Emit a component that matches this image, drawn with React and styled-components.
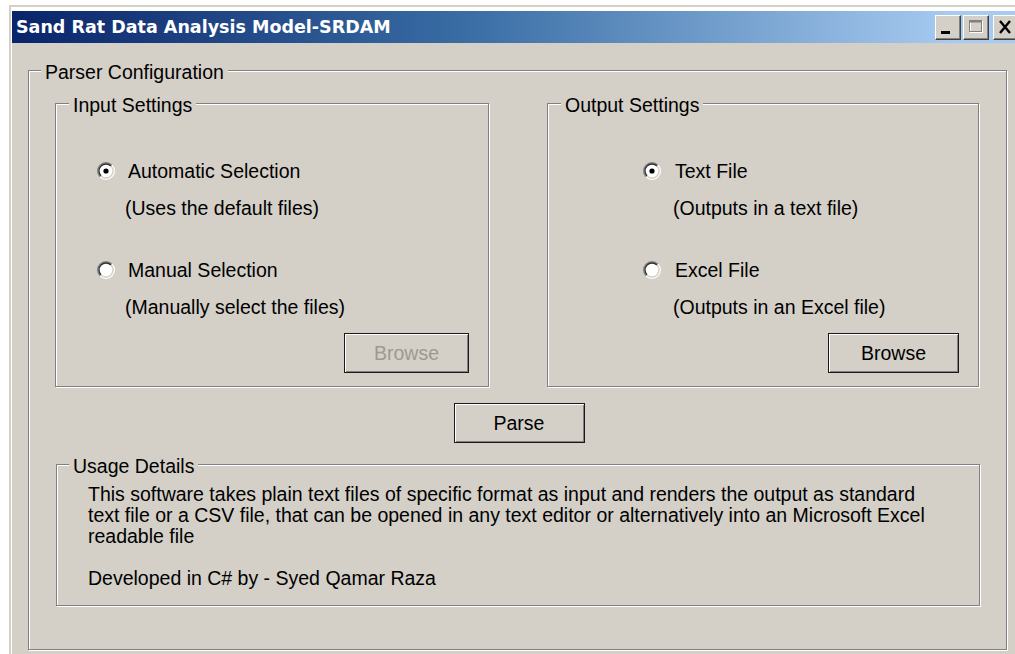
import React from "react";
import styled, { createGlobalStyle } from "styled-components";

const FACE = "#d4d0c8";
const SHADOW = "#808080";
const UI_FONT = `"Liberation Sans", Arial, sans-serif`;

const GlobalStyle = createGlobalStyle`
  html, body {
    margin: 0;
    padding: 0;
    background: #fff;
    overflow: hidden;
  }
  body {
    font-family: ${UI_FONT};
  }
`;

const Window = styled.div`
  margin: 5px 0 0 9px;
  width: 1020px;
  border-top: 2px solid ${FACE};
  border-left: 2px solid ${FACE};
  padding: 4px 0 0 1px;
  background: #fff;
`;

const TitleBar = styled.div`
  height: 32px;
  display: flex;
  align-items: center;
  justify-content: space-between;
  padding: 0 0 0 4px;
  background: linear-gradient(to right, #0a246a 0%, #3a6ea5 45%, #a6caf0 92%);
`;

const TitleText = styled.div`
  font-family: "DejaVu Sans", Verdana, sans-serif;
  font-weight: bold;
  font-size: 17.5px;
  color: #fff;
`;

const Controls = styled.div`
  display: flex;
  align-items: center;
  gap: 2px;
  margin-right: 13px;
`;

const CaptionButton = styled.div`
  width: 26px;
  height: 25px;
  box-sizing: border-box;
  background: ${FACE};
  border: 1px solid;
  border-color: #fff #404040 #404040 #fff;
  box-shadow: inset -1px -1px 0 ${SHADOW};
  display: flex;
  align-items: center;
  justify-content: center;
  margin-left: ${(p) => p.$gap || 0}px;
`;

const Body = styled.div`
  background: ${FACE};
  padding: 16px 0 20px 16px;
`;

const Group = styled.fieldset`
  margin: 0;
  box-sizing: border-box;
  min-width: 0;
  border: 1px solid ${SHADOW};
  box-shadow: inset 1px 1px 0 #fff, 1px 1px 0 #fff;
  padding: ${(p) => p.$pad};
  width: ${(p) => p.$width}px;
  height: ${(p) => (p.$height ? `${p.$height}px` : "auto")};
`;

/* the caption sits across the etched top edge; its text rides a little low, as in the classic theme */
const Caption = styled.legend`
  margin-left: ${(p) => p.$indent}px;
  padding: 4px 4px 0;
  font-size: 19.5px;
  line-height: 18px;
  color: #000;
  background: ${FACE};
`;

const SettingsRow = styled.div`
  display: flex;
  gap: 58px;
`;

const OptionBlock = styled.div`
  display: flex;
  flex-direction: column;
  margin-top: ${(p) => p.$top}px;
`;

const RadioRow = styled.label`
  display: flex;
  align-items: center;
  height: 22px;
  font-size: 19.5px;
  color: #000;
  gap: ${(p) => p.$gap}px;
`;

const RadioSvg = styled.svg`
  flex: none;
  width: 18px;
  height: 18px;
`;

const Hint = styled.div`
  margin: 15px 0 0 ${(p) => p.$indent}px;
  height: 22px;
  line-height: 22px;
  font-size: 19.5px;
  color: #000;
`;

const ButtonRow = styled.div`
  display: flex;
  justify-content: ${(p) => p.$align || "flex-end"};
  margin-top: ${(p) => p.$top}px;
  padding-left: ${(p) => p.$shift || 0}px;
`;

const Button = styled.button`
  width: ${(p) => p.$width}px;
  height: 40px;
  box-sizing: border-box;
  padding: 0;
  font-family: ${UI_FONT};
  font-size: 19.5px;
  color: ${(p) => (p.disabled ? "#9d9991" : "#000")};
  background: ${FACE};
  border: 1px solid #1a1a1a;
  box-shadow: inset 1px 1px 0 #fff, inset -1px -1px 0 ${SHADOW};
`;

const UsageGroup = styled(Group)`
  margin: 10px 0 0 1px;
`;

const UsageText = styled.p`
  margin: ${(p) => p.$top}px 0 0;
  font-size: 19.5px;
  line-height: 21px;
  color: #000;
`;

// Classic sunken radio: dark upper-left rim, light lower-right rim, white well
function arc(r, fromTopRight) {
  const c = 9;
  const d = r * Math.SQRT1_2;
  const bl = `${(c - d).toFixed(2)} ${(c + d).toFixed(2)}`;
  const tr = `${(c + d).toFixed(2)} ${(c - d).toFixed(2)}`;
  return fromTopRight ? `M${tr} A${r} ${r} 0 0 1 ${bl}` : `M${bl} A${r} ${r} 0 0 1 ${tr}`;
}

function Radio({ checked }) {
  return (
    <RadioSvg viewBox="0 0 18 18">
      <circle cx="9" cy="9" r="7" fill="#fff" />
      <path d={arc(8.3, false)} fill="none" stroke={SHADOW} strokeWidth="1.4" />
      <path d={arc(8.3, true)} fill="none" stroke="#fff" strokeWidth="1.4" />
      <path d={arc(7, false)} fill="none" stroke="#303030" strokeWidth="1.3" />
      <path d={arc(7, true)} fill="none" stroke={FACE} strokeWidth="1.3" />
      {checked && <circle cx="9" cy="9" r="2.6" fill="#000" />}
    </RadioSvg>
  );
}

function Option({ checked, label, hint, top, gap, hintIndent }) {
  return (
    <OptionBlock $top={top}>
      <RadioRow $gap={gap}>
        <Radio checked={checked} />
        {label}
      </RadioRow>
      <Hint $indent={hintIndent}>{hint}</Hint>
    </OptionBlock>
  );
}

function SettingsGroup({ title, width, padLeft, captionAt, gap, hintIndent, options, buttonWidth, disabled }) {
  return (
    <Group $width={width} $height={295} $pad={`0 19px 0 ${padLeft}px`}>
      <Caption $indent={captionAt - padLeft}>{title}</Caption>
      <Option {...options[0]} top={46} gap={gap} hintIndent={hintIndent} />
      <Option {...options[1]} top={40} gap={gap} hintIndent={hintIndent} />
      <ButtonRow $top={15}>
        <Button $width={buttonWidth} disabled={disabled}>
          Browse
        </Button>
      </ButtonRow>
    </Group>
  );
}

export default function App() {
  return (
    <>
      <GlobalStyle />
      <Window>
        <TitleBar>
          <TitleText>Sand Rat Data Analysis Model-SRDAM</TitleText>
          <Controls>
            <CaptionButton>
              <svg width="24" height="23" viewBox="0 0 24 23">
                <rect x="5" y="15" width="9" height="3" fill="#000" />
              </svg>
            </CaptionButton>
            <CaptionButton>
              <svg width="24" height="23" viewBox="0 0 24 23">
                <rect x="6.5" y="5.5" width="12" height="11" fill="none" stroke="#fff" />
                <rect x="5.5" y="4.5" width="12" height="11" fill="none" stroke={SHADOW} />
                <rect x="5.5" y="5" width="12" height="1.5" fill={SHADOW} />
              </svg>
            </CaptionButton>
            <CaptionButton $gap={2}>
              <svg width="24" height="23" viewBox="0 0 24 23">
                <path d="M6 5 L16 17 M16 5 L6 17" stroke="#000" strokeWidth="2.4" />
              </svg>
            </CaptionButton>
          </Controls>
        </TitleBar>
        <Body>
          <Group $width={979} $height={591} $pad="11px 27px 43px 26px">
            <Caption $indent={-14}>Parser Configuration</Caption>
            <SettingsRow>
              <SettingsGroup
                title="Input Settings"
                width={434}
                padLeft={41}
                captionAt={13}
                gap={13}
                hintIndent={28}
                buttonWidth={125}
                disabled
                options={[
                  { checked: true, label: "Automatic Selection", hint: "(Uses the default files)" },
                  { checked: false, label: "Manual Selection", hint: "(Manually select the files)" },
                ]}
              />
              <SettingsGroup
                title="Output Settings"
                width={432}
                padLeft={95}
                captionAt={13}
                gap={14}
                hintIndent={30}
                buttonWidth={131}
                options={[
                  { checked: true, label: "Text File", hint: "(Outputs in a text file)" },
                  { checked: false, label: "Excel File", hint: "(Outputs in an Excel file)" },
                ]}
              />
            </SettingsRow>
            <ButtonRow $align="center" $top={16} $shift={4}>
              <Button $width={131}>Parse</Button>
            </ButtonRow>
            <UsageGroup $width={924} $pad="9px 40px 16px 31px">
              <Caption $indent={-19}>Usage Details</Caption>
              <UsageText $top={0}>
                This software takes plain text files of specific format as input and renders the output as standard
                text file or a CSV file, that can be opened in any text editor or alternatively into an Microsoft Excel
                readable file
              </UsageText>
              <UsageText $top={21}>Developed in C# by - Syed Qamar Raza</UsageText>
            </UsageGroup>
          </Group>
        </Body>
      </Window>
    </>
  );
}
